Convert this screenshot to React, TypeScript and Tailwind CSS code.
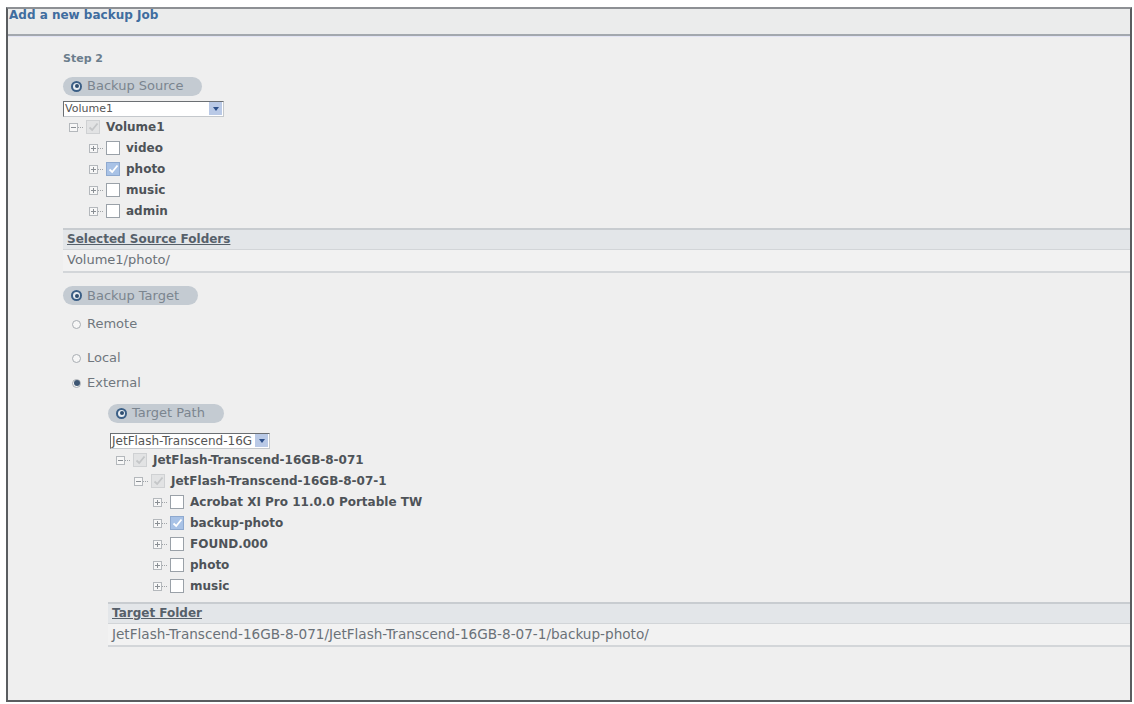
import type { ReactNode } from 'react'

type Node = { label: string; checked?: boolean; dim?: boolean; open?: boolean }

function Expander({ open }: { open?: boolean }) {
  return (
    <span className="flex items-center shrink-0">
      <span className="w-[9px] h-[9px] border border-[#b4b8bc] bg-[#f7f7f7] flex items-center justify-center relative">
        <span className="absolute w-[5px] h-px bg-[#8a8f94]" />
        {!open && <span className="absolute w-px h-[5px] bg-[#8a8f94]" />}
      </span>
      <span className="w-[5px] border-t border-dotted border-[#a0a4a8]" />
    </span>
  )
}

function Check({ checked, dim }: { checked?: boolean; dim?: boolean }) {
  const box = dim
    ? 'bg-[#e2e3e4] border-[#cfd1d3]'
    : checked
      ? 'bg-[#a8c2e6] border-[#8ea9cf]'
      : 'bg-white border-[#9aa1a8]'
  return (
    <span className={`w-[14px] h-[14px] border shrink-0 flex items-center justify-center ${box}`}>
      {(checked || dim) && (
        <svg width="11" height="10" viewBox="0 0 11 10">
          <path
            d="M1.5 5.5 L4.2 8 L9.5 1.5"
            fill="none"
            stroke={dim ? '#c4c6c8' : '#ffffff'}
            strokeWidth="1.8"
          />
        </svg>
      )}
    </span>
  )
}

function TreeRow({ node, indent }: { node: Node; indent: string }) {
  return (
    <div className={`flex items-center h-[21px] gap-[3px] ${indent}`}>
      <Expander open={node.open} />
      <Check checked={node.checked} dim={node.dim} />
      <span className="ml-[3px] font-bold text-[12px] text-[#4e5358] whitespace-nowrap">{node.label}</span>
    </div>
  )
}

function Pill({ children }: { children: ReactNode }) {
  return (
    <div className="inline-flex items-center h-[19px] rounded-full bg-[#c4cbd2] pl-[8px] pr-[19px] gap-[5px]">
      <span className="w-[11px] h-[11px] rounded-full bg-[#3b5f86] flex items-center justify-center">
        <span className="w-[7px] h-[7px] rounded-full bg-[#e8edf2] flex items-center justify-center">
          <span className="w-[4px] h-[4px] rounded-full bg-[#2e4d70]" />
        </span>
      </span>
      <span className="text-[13px] text-[#7b858f]">{children}</span>
    </div>
  )
}

function Select({ value, width, size }: { value: string; width: string; size: string }) {
  return (
    <div className={`flex items-center h-[16px] bg-white border border-[#c4c8cc] border-t-[#6b6f73] border-l-[#6b6f73] ${width}`}>
      <span className={`flex-1 leading-[14px] text-[#555] pl-[1px] whitespace-nowrap overflow-hidden ${size}`}>{value}</span>
      <span className="w-[13px] h-[13px] bg-[#b9c9e6] flex items-center justify-center mr-[1px]">
        <span className="w-0 h-0 border-l-[3px] border-r-[3px] border-t-[4px] border-l-transparent border-r-transparent border-t-[#2c4f8a]" />
      </span>
    </div>
  )
}

function Radio({ label, on }: { label: string; on?: boolean }) {
  return (
    <div className="flex items-center gap-[6px] h-[18px] pl-[9px]">
      <span className="w-[9px] h-[9px] rounded-full border border-[#a8adb2] bg-[#f6f6f6] flex items-center justify-center">
        {on && <span className="w-[6px] h-[6px] rounded-full bg-[#3d5673]" />}
      </span>
      <span className="text-[13px] text-[#70777e]">{label}</span>
    </div>
  )
}

function Section({ title, value, size }: { title: string; value: string; size: string }) {
  return (
    <div>
      <div className="h-[22px] flex items-center px-[4px] bg-[#e3e6e9] border-t-2 border-[#c8ccd0] border-b border-b-[#d2d5d8]">
        <span className="text-[12px] font-bold underline text-[#56606a]">{title}</span>
      </div>
      <div className="h-[23px] flex items-center px-[4px] bg-[#f2f2f2] border-b-2 border-[#d3d6d9]">
        <span className={`text-[#6a7178] whitespace-nowrap ${size}`}>{value}</span>
      </div>
    </div>
  )
}

const source: Node[] = [
  { label: 'video' },
  { label: 'photo', checked: true },
  { label: 'music' },
  { label: 'admin' },
]

const target: Node[] = [
  { label: 'Acrobat XI Pro 11.0.0 Portable TW' },
  { label: 'backup-photo', checked: true },
  { label: 'FOUND.000' },
  { label: 'photo' },
  { label: 'music' },
]

export default function App() {
  return (
    <div className="w-[1134px] h-[704px] bg-white overflow-hidden font-['DejaVu_Sans',sans-serif]">
      <div className="h-[7px]" />
      <div className="ml-[6px] w-[1126px] h-[695px] border-2 border-[#5a5d60] border-t-[#8d9094] bg-[#efefef] flex flex-col">
        <div className="h-[27px] bg-[#ebecec] border-b-2 border-[#a3a8ae] px-[1px]">
          <span className="block text-[12px] leading-[12px] font-bold text-[#3f6d9f]">Add a new backup Job</span>
        </div>
        <div className="flex-1 pl-[55px] pt-[14px] border-t border-[#e2e4f4]">
          <div className="text-[11px] font-bold text-[#6b7d8c] h-[18px]">Step 2</div>
          <div className="mt-[2px]"><Pill>Backup Source</Pill></div>
          <div className="mt-[5px]"><Select value="Volume1" width="w-[161px]" size="text-[11px]" /></div>
          <div>
            <TreeRow node={{ label: 'Volume1', dim: true, open: true }} indent="pl-[6px]" />
            {source.map((n) => (
              <TreeRow key={n.label} node={n} indent="pl-[26px]" />
            ))}
          </div>
          <div className="mt-[6px]">
            <Section title="Selected Source Folders" value="Volume1/photo/" size="text-[13px]" />
          </div>
          <div className="mt-[8px]"><Pill>Backup Target</Pill></div>
          <div className="mt-[10px]"><Radio label="Remote" /></div>
          <div className="mt-[16px]"><Radio label="Local" /></div>
          <div className="mt-[7px]"><Radio label="External" on /></div>
          <div className="pl-[45px]">
            <div className="mt-[6px]"><Pill>Target Path</Pill></div>
            <div className="mt-[10px] ml-[2px]"><Select value="JetFlash-Transcend-16G" width="w-[160px]" size="text-[12px]" /></div>
            <div className="mt-[1px]">
              <TreeRow node={{ label: 'JetFlash-Transcend-16GB-8-071', dim: true, open: true }} indent="pl-[8px]" />
              <TreeRow node={{ label: 'JetFlash-Transcend-16GB-8-07-1', dim: true, open: true }} indent="pl-[26px]" />
              {target.map((n) => (
                <TreeRow key={n.label} node={n} indent="pl-[45px]" />
              ))}
            </div>
            <div className="mt-[5px]">
              <Section
                title="Target Folder"
                value="JetFlash-Transcend-16GB-8-071/JetFlash-Transcend-16GB-8-07-1/backup-photo/"
                size="text-[13.6px]"
              />
            </div>
          </div>
        </div>
      </div>
    </div>
  )
}
